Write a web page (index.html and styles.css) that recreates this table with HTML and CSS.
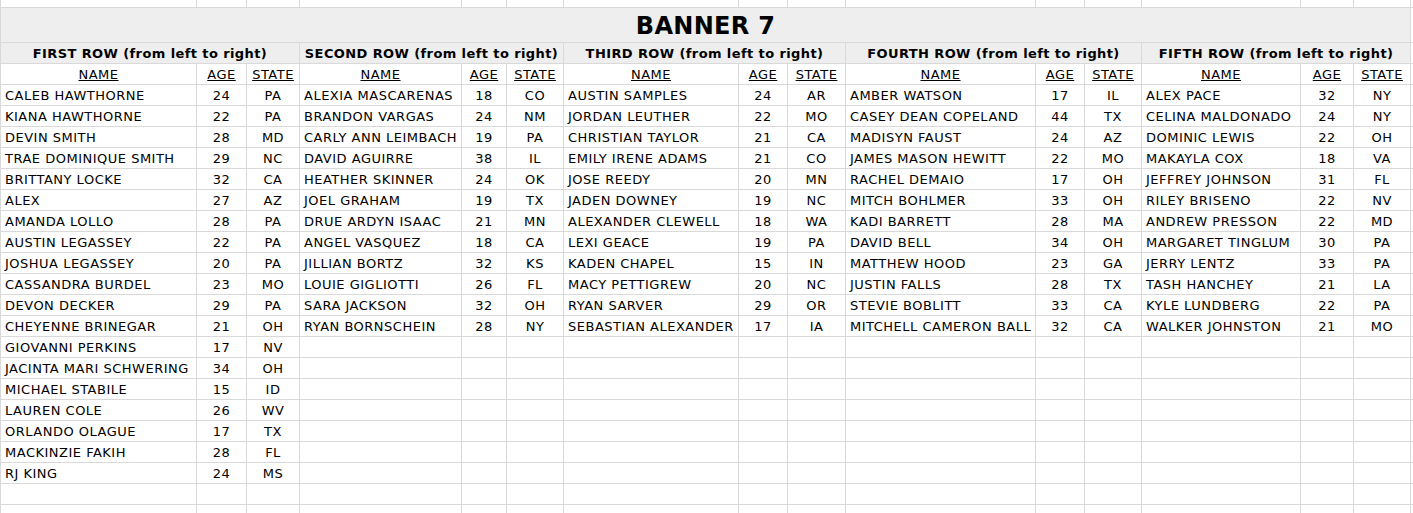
FILE: index.html
```html
<!DOCTYPE html>
<html>
<head>
<meta charset="utf-8">
<title>Banner 7</title>
<link rel="stylesheet" href="styles.css">
</head>
<body>
<div class="sheet">
  <div class="c"></div><div class="c"></div><div class="c"></div><div class="c"></div><div class="c"></div><div class="c"></div><div class="c"></div><div class="c"></div><div class="c"></div><div class="c"></div><div class="c"></div><div class="c"></div><div class="c"></div><div class="c"></div><div class="c"></div><div class="c"></div>

  <div class="banner">BANNER 7</div><div class="c"></div>

  <div class="group">FIRST ROW (from left to right)</div>
  <div class="group">SECOND ROW (from left to right)</div>
  <div class="group">THIRD ROW (from left to right)</div>
  <div class="group">FOURTH ROW (from left to right)</div>
  <div class="group">FIFTH ROW (from left to right)</div>
  <div class="c"></div>

  <div class="h"><u>NAME</u></div><div class="h"><u>AGE</u></div><div class="h"><u>STATE</u></div>
  <div class="h"><u>NAME</u></div><div class="h"><u>AGE</u></div><div class="h"><u>STATE</u></div>
  <div class="h"><u>NAME</u></div><div class="h"><u>AGE</u></div><div class="h"><u>STATE</u></div>
  <div class="h"><u>NAME</u></div><div class="h"><u>AGE</u></div><div class="h"><u>STATE</u></div>
  <div class="h"><u>NAME</u></div><div class="h"><u>AGE</u></div><div class="h"><u>STATE</u></div>
  <div class="c"></div>

  <div class="n">CALEB HAWTHORNE</div><div class="m">24</div><div class="m">PA</div>
  <div class="n">ALEXIA MASCARENAS</div><div class="m">18</div><div class="m">CO</div>
  <div class="n">AUSTIN SAMPLES</div><div class="m">24</div><div class="m">AR</div>
  <div class="n">AMBER WATSON</div><div class="m">17</div><div class="m">IL</div>
  <div class="n">ALEX PACE</div><div class="m">32</div><div class="m">NY</div>
  <div class="c"></div>

  <div class="n">KIANA HAWTHORNE</div><div class="m">22</div><div class="m">PA</div>
  <div class="n">BRANDON VARGAS</div><div class="m">24</div><div class="m">NM</div>
  <div class="n">JORDAN LEUTHER</div><div class="m">22</div><div class="m">MO</div>
  <div class="n">CASEY DEAN COPELAND</div><div class="m">44</div><div class="m">TX</div>
  <div class="n">CELINA MALDONADO</div><div class="m">24</div><div class="m">NY</div>
  <div class="c"></div>

  <div class="n">DEVIN SMITH</div><div class="m">28</div><div class="m">MD</div>
  <div class="n">CARLY ANN LEIMBACH</div><div class="m">19</div><div class="m">PA</div>
  <div class="n">CHRISTIAN TAYLOR</div><div class="m">21</div><div class="m">CA</div>
  <div class="n">MADISYN FAUST</div><div class="m">24</div><div class="m">AZ</div>
  <div class="n">DOMINIC LEWIS</div><div class="m">22</div><div class="m">OH</div>
  <div class="c"></div>

  <div class="n">TRAE DOMINIQUE SMITH</div><div class="m">29</div><div class="m">NC</div>
  <div class="n">DAVID AGUIRRE</div><div class="m">38</div><div class="m">IL</div>
  <div class="n">EMILY IRENE ADAMS</div><div class="m">21</div><div class="m">CO</div>
  <div class="n">JAMES MASON HEWITT</div><div class="m">22</div><div class="m">MO</div>
  <div class="n">MAKAYLA COX</div><div class="m">18</div><div class="m">VA</div>
  <div class="c"></div>

  <div class="n">BRITTANY LOCKE</div><div class="m">32</div><div class="m">CA</div>
  <div class="n">HEATHER SKINNER</div><div class="m">24</div><div class="m">OK</div>
  <div class="n">JOSE REEDY</div><div class="m">20</div><div class="m">MN</div>
  <div class="n">RACHEL DEMAIO</div><div class="m">17</div><div class="m">OH</div>
  <div class="n">JEFFREY JOHNSON</div><div class="m">31</div><div class="m">FL</div>
  <div class="c"></div>

  <div class="n">ALEX</div><div class="m">27</div><div class="m">AZ</div>
  <div class="n">JOEL GRAHAM</div><div class="m">19</div><div class="m">TX</div>
  <div class="n">JADEN DOWNEY</div><div class="m">19</div><div class="m">NC</div>
  <div class="n">MITCH BOHLMER</div><div class="m">33</div><div class="m">OH</div>
  <div class="n">RILEY BRISENO</div><div class="m">22</div><div class="m">NV</div>
  <div class="c"></div>

  <div class="n">AMANDA LOLLO</div><div class="m">28</div><div class="m">PA</div>
  <div class="n">DRUE ARDYN ISAAC</div><div class="m">21</div><div class="m">MN</div>
  <div class="n">ALEXANDER CLEWELL</div><div class="m">18</div><div class="m">WA</div>
  <div class="n">KADI BARRETT</div><div class="m">28</div><div class="m">MA</div>
  <div class="n">ANDREW PRESSON</div><div class="m">22</div><div class="m">MD</div>
  <div class="c"></div>

  <div class="n">AUSTIN LEGASSEY</div><div class="m">22</div><div class="m">PA</div>
  <div class="n">ANGEL VASQUEZ</div><div class="m">18</div><div class="m">CA</div>
  <div class="n">LEXI GEACE</div><div class="m">19</div><div class="m">PA</div>
  <div class="n">DAVID BELL</div><div class="m">34</div><div class="m">OH</div>
  <div class="n">MARGARET TINGLUM</div><div class="m">30</div><div class="m">PA</div>
  <div class="c"></div>

  <div class="n">JOSHUA LEGASSEY</div><div class="m">20</div><div class="m">PA</div>
  <div class="n">JILLIAN BORTZ</div><div class="m">32</div><div class="m">KS</div>
  <div class="n">KADEN CHAPEL</div><div class="m">15</div><div class="m">IN</div>
  <div class="n">MATTHEW HOOD</div><div class="m">23</div><div class="m">GA</div>
  <div class="n">JERRY LENTZ</div><div class="m">33</div><div class="m">PA</div>
  <div class="c"></div>

  <div class="n">CASSANDRA BURDEL</div><div class="m">23</div><div class="m">MO</div>
  <div class="n">LOUIE GIGLIOTTI</div><div class="m">26</div><div class="m">FL</div>
  <div class="n">MACY PETTIGREW</div><div class="m">20</div><div class="m">NC</div>
  <div class="n">JUSTIN FALLS</div><div class="m">28</div><div class="m">TX</div>
  <div class="n">TASH HANCHEY</div><div class="m">21</div><div class="m">LA</div>
  <div class="c"></div>

  <div class="n">DEVON DECKER</div><div class="m">29</div><div class="m">PA</div>
  <div class="n">SARA JACKSON</div><div class="m">32</div><div class="m">OH</div>
  <div class="n">RYAN SARVER</div><div class="m">29</div><div class="m">OR</div>
  <div class="n">STEVIE BOBLITT</div><div class="m">33</div><div class="m">CA</div>
  <div class="n">KYLE LUNDBERG</div><div class="m">22</div><div class="m">PA</div>
  <div class="c"></div>

  <div class="n">CHEYENNE BRINEGAR</div><div class="m">21</div><div class="m">OH</div>
  <div class="n">RYAN BORNSCHEIN</div><div class="m">28</div><div class="m">NY</div>
  <div class="n">SEBASTIAN ALEXANDER</div><div class="m">17</div><div class="m">IA</div>
  <div class="n">MITCHELL CAMERON BALL</div><div class="m">32</div><div class="m">CA</div>
  <div class="n">WALKER JOHNSTON</div><div class="m">21</div><div class="m">MO</div>
  <div class="c"></div>

  <div class="n">GIOVANNI PERKINS</div><div class="m">17</div><div class="m">NV</div>
  <div class="c"></div><div class="c"></div><div class="c"></div><div class="c"></div><div class="c"></div><div class="c"></div><div class="c"></div><div class="c"></div><div class="c"></div><div class="c"></div><div class="c"></div><div class="c"></div><div class="c"></div>

  <div class="n">JACINTA MARI SCHWERING</div><div class="m">34</div><div class="m">OH</div>
  <div class="c"></div><div class="c"></div><div class="c"></div><div class="c"></div><div class="c"></div><div class="c"></div><div class="c"></div><div class="c"></div><div class="c"></div><div class="c"></div><div class="c"></div><div class="c"></div><div class="c"></div>

  <div class="n">MICHAEL STABILE</div><div class="m">15</div><div class="m">ID</div>
  <div class="c"></div><div class="c"></div><div class="c"></div><div class="c"></div><div class="c"></div><div class="c"></div><div class="c"></div><div class="c"></div><div class="c"></div><div class="c"></div><div class="c"></div><div class="c"></div><div class="c"></div>

  <div class="n">LAUREN COLE</div><div class="m">26</div><div class="m">WV</div>
  <div class="c"></div><div class="c"></div><div class="c"></div><div class="c"></div><div class="c"></div><div class="c"></div><div class="c"></div><div class="c"></div><div class="c"></div><div class="c"></div><div class="c"></div><div class="c"></div><div class="c"></div>

  <div class="n">ORLANDO OLAGUE</div><div class="m">17</div><div class="m">TX</div>
  <div class="c"></div><div class="c"></div><div class="c"></div><div class="c"></div><div class="c"></div><div class="c"></div><div class="c"></div><div class="c"></div><div class="c"></div><div class="c"></div><div class="c"></div><div class="c"></div><div class="c"></div>

  <div class="n">MACKINZIE FAKIH</div><div class="m">28</div><div class="m">FL</div>
  <div class="c"></div><div class="c"></div><div class="c"></div><div class="c"></div><div class="c"></div><div class="c"></div><div class="c"></div><div class="c"></div><div class="c"></div><div class="c"></div><div class="c"></div><div class="c"></div><div class="c"></div>

  <div class="n">RJ KING</div><div class="m">24</div><div class="m">MS</div>
  <div class="c"></div><div class="c"></div><div class="c"></div><div class="c"></div><div class="c"></div><div class="c"></div><div class="c"></div><div class="c"></div><div class="c"></div><div class="c"></div><div class="c"></div><div class="c"></div><div class="c"></div>

  <div class="c"></div><div class="c"></div><div class="c"></div><div class="c"></div><div class="c"></div><div class="c"></div><div class="c"></div><div class="c"></div><div class="c"></div><div class="c"></div><div class="c"></div><div class="c"></div><div class="c"></div><div class="c"></div><div class="c"></div><div class="c"></div>

  <div class="c"></div><div class="c"></div><div class="c"></div><div class="c"></div><div class="c"></div><div class="c"></div><div class="c"></div><div class="c"></div><div class="c"></div><div class="c"></div><div class="c"></div><div class="c"></div><div class="c"></div><div class="c"></div><div class="c"></div><div class="c"></div>
</div>
</body>
</html>
```

FILE: styles.css
```css
html, body {
  margin: 0;
  padding: 0;
  background: #ffffff;
  overflow: hidden;
}

.sheet {
  display: grid;
  grid-template-columns: 195px 49px 52px 161px 44px 56px 174px 48px 57px 189px 48px 56px 158px 52px 56px 1fr;
  grid-template-rows: 7px 34px 20px 20px;
  grid-auto-rows: 20px;
  gap: 1px;
  background: #d9d9d9;
  padding-left: 1px;
  font-family: "DejaVu Sans", Verdana, sans-serif;
  font-size: 13px;
  letter-spacing: 0.5px;
  color: #000000;
}

.sheet > div {
  background: #ffffff;
  white-space: nowrap;
  overflow: hidden;
  line-height: 22px;
}

.banner {
  grid-column: span 15;
  background: #eeeeee !important;
  text-align: center;
  font-weight: bold;
  font-size: 24px;
  letter-spacing: 0.3px;
  line-height: 37px !important;
}

.group {
  grid-column: span 3;
  background: #eeeeee !important;
  text-align: center;
  font-weight: bold;
  font-size: 13px;
  letter-spacing: 0.4px;
}

.h {
  text-align: center;
}

.n {
  padding-left: 4px;
}

.m {
  text-align: center;
}
```
